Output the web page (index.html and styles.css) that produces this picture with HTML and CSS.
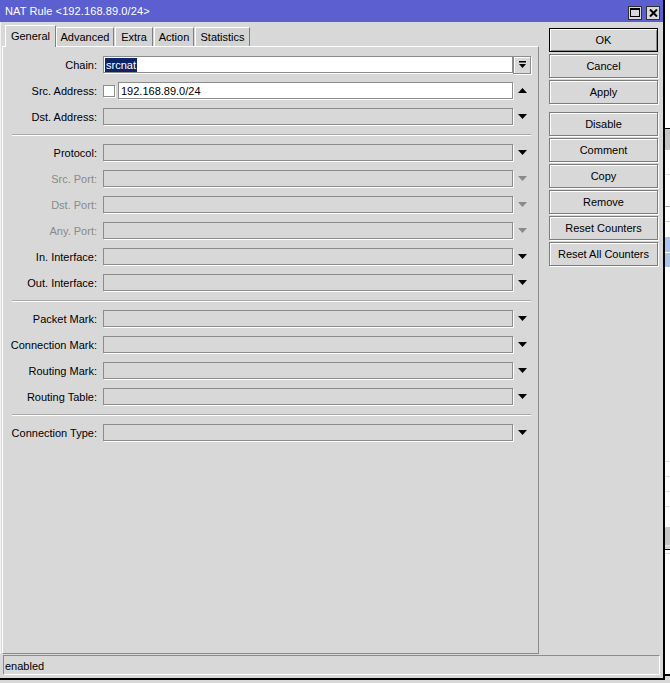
FILE: index.html
```html
<!DOCTYPE html>
<html>
<head>
<meta charset="utf-8">
<title>NAT Rule</title>
<link rel="stylesheet" href="styles.css">
</head>
<body>
<div class="screen">
  <div class="window">
    <div class="titlebar">
      <span class="title">NAT Rule &lt;192.168.89.0/24&gt;</span>
      <div class="tbtns">
        <span class="tbtn"><svg width="10" height="9" viewBox="0 0 10 9"><rect x="0.5" y="0.5" width="9" height="8" fill="none" stroke="#000"/><rect x="0" y="0" width="10" height="2" fill="#000"/></svg></span>
        <span class="tbtn"><svg width="9" height="8" viewBox="0 0 9 8"><path d="M1 0.5L8 7.5M8 0.5L1 7.5" stroke="#000" stroke-width="2"/></svg></span>
      </div>
    </div>
    <div class="main">
      <div class="leftcol">
        <div class="tabs">
          <div class="tab active t-general">General</div>
          <div class="tab t-advanced">Advanced</div>
          <div class="tab t-extra">Extra</div>
          <div class="tab t-action">Action</div>
          <div class="tab t-stats">Statistics</div>
        </div>
        <div class="panel">
          <div class="row">
            <span class="lbl">Chain:</span>
            <div class="field white sel-field"><span class="sel">srcnat</span></div>
            <div class="arrow"><span class="dbtn"><svg width="9" height="8" viewBox="0 0 9 8"><rect x="1" y="0" width="7" height="1.5" fill="#000"/><path d="M1 3h7L4.5 7z" fill="#000"/></svg></span></div>
          </div>
          <div class="row">
            <span class="lbl">Src. Address:</span>
            <span class="check"></span>
            <div class="field white short"><span class="ftext">192.168.89.0/24</span></div>
            <div class="arrow"><svg class="tri" width="9" height="5" viewBox="0 0 9 5"><path d="M4.5 0L9 5H0z" fill="#000"/></svg></div>
          </div>
          <div class="row">
            <span class="lbl">Dst. Address:</span>
            <div class="field"></div>
            <div class="arrow"><svg class="tri" width="9" height="5" viewBox="0 0 9 5"><path d="M0 0h9L4.5 5z" fill="#000"/></svg></div>
          </div>
          <div class="sep"></div>
          <div class="row">
            <span class="lbl">Protocol:</span>
            <div class="field"></div>
            <div class="arrow"><svg class="tri" width="9" height="5" viewBox="0 0 9 5"><path d="M0 0h9L4.5 5z" fill="#000"/></svg></div>
          </div>
          <div class="row">
            <span class="lbl dim">Src. Port:</span>
            <div class="field"></div>
            <div class="arrow"><svg class="tri" width="9" height="5" viewBox="0 0 9 5"><path d="M0 0h9L4.5 5z" fill="#8a8a8a"/></svg></div>
          </div>
          <div class="row">
            <span class="lbl dim">Dst. Port:</span>
            <div class="field"></div>
            <div class="arrow"><svg class="tri" width="9" height="5" viewBox="0 0 9 5"><path d="M0 0h9L4.5 5z" fill="#8a8a8a"/></svg></div>
          </div>
          <div class="row">
            <span class="lbl dim">Any. Port:</span>
            <div class="field"></div>
            <div class="arrow"><svg class="tri" width="9" height="5" viewBox="0 0 9 5"><path d="M0 0h9L4.5 5z" fill="#8a8a8a"/></svg></div>
          </div>
          <div class="row">
            <span class="lbl">In. Interface:</span>
            <div class="field"></div>
            <div class="arrow"><svg class="tri" width="9" height="5" viewBox="0 0 9 5"><path d="M0 0h9L4.5 5z" fill="#000"/></svg></div>
          </div>
          <div class="row">
            <span class="lbl">Out. Interface:</span>
            <div class="field"></div>
            <div class="arrow"><svg class="tri" width="9" height="5" viewBox="0 0 9 5"><path d="M0 0h9L4.5 5z" fill="#000"/></svg></div>
          </div>
          <div class="sep"></div>
          <div class="row">
            <span class="lbl">Packet Mark:</span>
            <div class="field"></div>
            <div class="arrow"><svg class="tri" width="9" height="5" viewBox="0 0 9 5"><path d="M0 0h9L4.5 5z" fill="#000"/></svg></div>
          </div>
          <div class="row">
            <span class="lbl">Connection Mark:</span>
            <div class="field"></div>
            <div class="arrow"><svg class="tri" width="9" height="5" viewBox="0 0 9 5"><path d="M0 0h9L4.5 5z" fill="#000"/></svg></div>
          </div>
          <div class="row">
            <span class="lbl">Routing Mark:</span>
            <div class="field"></div>
            <div class="arrow"><svg class="tri" width="9" height="5" viewBox="0 0 9 5"><path d="M0 0h9L4.5 5z" fill="#000"/></svg></div>
          </div>
          <div class="row">
            <span class="lbl">Routing Table:</span>
            <div class="field"></div>
            <div class="arrow"><svg class="tri" width="9" height="5" viewBox="0 0 9 5"><path d="M0 0h9L4.5 5z" fill="#000"/></svg></div>
          </div>
          <div class="sep"></div>
          <div class="row">
            <span class="lbl">Connection Type:</span>
            <div class="field"></div>
            <div class="arrow"><svg class="tri" width="9" height="5" viewBox="0 0 9 5"><path d="M0 0h9L4.5 5z" fill="#000"/></svg></div>
          </div>
        </div>
      </div>
      <div class="buttons">
        <div class="btn default">OK</div>
        <div class="btn">Cancel</div>
        <div class="btn group-end">Apply</div>
        <div class="btn">Disable</div>
        <div class="btn">Comment</div>
        <div class="btn">Copy</div>
        <div class="btn">Remove</div>
        <div class="btn">Reset Counters</div>
        <div class="btn">Reset All Counters</div>
      </div>
    </div>
    <div class="status">enabled</div>
  </div>
  <div class="backdrop">
    <div class="bd b1"></div>
    <div class="bd bline"></div>
    <div class="bd bhead"></div>
    <div class="bd b2"></div>
    <div class="bd b3"></div>
    <div class="bd b4"></div>
    <div class="bd b5"></div>
    <div class="bd bsel1"></div>
    <div class="bd bsel2"></div>
    <div class="bd b6"></div>
    <div class="bd b7"></div>
    <div class="bd b7"></div>
    <div class="bd b7"></div>
    <div class="bd b8"></div>
    <div class="bd bhead2"></div>
    <div class="bd b9"></div>
    <div class="bd bline"></div>
    <div class="bd b10"></div>
    <div class="bd b11"></div>
  </div>
</div>
</body>
</html>
```

FILE: styles.css
```css
* {
  box-sizing: border-box;
}

html,
body {
  margin: 0;
  padding: 0;
}

body {
  width: 670px;
  height: 683px;
  overflow: hidden;
  background: #d8d8d8;
  font-family: "Liberation Sans", Arial, sans-serif;
  font-size: 11px;
  color: #000;
}

.screen {
  display: flex;
  height: 683px;
}

.window {
  flex: none;
  width: 665px;
  height: 680px;
  display: flex;
  flex-direction: column;
  background: #d8d8d8;
  border-right: 2px solid #000;
  border-bottom: 2px solid #000;
}

/* Title bar */
.titlebar {
  height: 22px;
  flex: none;
  background: #5b5fcf;
  color: #fff;
  display: flex;
  align-items: center;
  justify-content: space-between;
  padding: 0 3px 0 5px;
}

.title {
  white-space: nowrap;
  line-height: 22px;
  letter-spacing: 0.1px;
}

.tbtns {
  display: flex;
  gap: 4px;
  margin-top: 3px;
}

.tbtn {
  width: 14px;
  height: 14px;
  background: #d8d8d8;
  border: 1px solid #303030;
  display: flex;
  align-items: center;
  justify-content: center;
}

/* Main area */
.main {
  flex: none;
  height: 632px;
  display: flex;
  border-left: 1px solid #f2f2f2;
  padding-left: 1px;
}

.leftcol {
  width: 537px;
  display: flex;
  flex-direction: column;
}

.tabs {
  height: 24px;
  padding: 3px 0 0 3px;
  display: flex;
  align-items: flex-end;
}

.tab {
  height: 19px;
  padding-top: 1px;
  line-height: 17px;
  text-align: center;
  white-space: nowrap;
  background: #d3d3d3;
  border-top: 1px solid #fff;
  border-left: 1px solid #fff;
  border-right: 1px solid #808080;
  margin-right: 1px;
}

.tab.active {
  height: 22px;
  padding-top: 0;
  line-height: 20px;
  background: #d8d8d8;
  margin-bottom: -1px;
  margin-right: 0;
  position: relative;
  z-index: 1;
}

.t-general { width: 51px; }
.t-advanced { width: 58px; }
.t-extra { width: 38px; }
.t-action { width: 40px; }
.t-stats { width: 55px; }

.panel {
  height: 608px;
  border-top: 1px solid #fff;
  border-left: 1px solid #fff;
  border-right: 1px solid #8c8c8c;
  border-bottom: 1px solid #8c8c8c;
  padding-top: 9px;
}

.row {
  display: flex;
  align-items: center;
  height: 17px;
  margin-bottom: 9px;
}

.lbl {
  width: 94px;
  height: 17px;
  margin-right: 6px;
  padding-top: 1px;
  text-align: right;
  white-space: nowrap;
  line-height: 17px;
}

.lbl.dim {
  color: #8a8a8a;
}

.field {
  width: 410px;
  height: 17px;
  border: 1px solid #8c8c8c;
  box-shadow: 1px 1px 0 #fff;
  padding-left: 2px;
  line-height: 15px;
  white-space: nowrap;
  display: flex;
  align-items: center;
}

.field.white {
  background: #fff;
}

.field.short {
  width: 395px;
}

.field.sel-field {
  padding-left: 1px;
}

.ftext {
  padding-top: 1px;
  line-height: 14px;
}

.sel {
  background: #0a246a;
  color: #fff;
  line-height: 13px;
  padding: 1px 1px 0 1px;
}

.check {
  width: 12px;
  height: 12px;
  background: #fff;
  border: 1px solid #8c8c8c;
  box-shadow: 1px 1px 0 #fff;
  margin-right: 3px;
}

.arrow {
  width: 18px;
  height: 17px;
  display: flex;
  align-items: center;
  justify-content: center;
}

.tri {
  display: block;
  margin-top: -1px;
  margin-left: 1px;
}

.dbtn {
  width: 18px;
  height: 18px;
  border: 1px solid #8c8c8c;
  box-shadow: inset 1px 1px 0 #fff, 1px 1px 0 #fff;
  display: flex;
  align-items: center;
  justify-content: center;
}

.dbtn svg {
  display: block;
}

.sep {
  width: 519px;
  height: 2px;
  margin: 0 0 8px 9px;
  border-top: 1px solid #a8a8a8;
  border-bottom: 1px solid #fff;
}

/* Buttons */
.buttons {
  width: 109px;
  margin-left: 10px;
  padding-top: 6px;
  display: flex;
  flex-direction: column;
}

.btn {
  height: 24px;
  margin-bottom: 2px;
  border: 1px solid #7c7c7c;
  box-shadow: inset 1px 1px 0 #fff, 1px 1px 0 #fff;
  text-align: center;
  line-height: 22px;
  white-space: nowrap;
}

.btn.default {
  border-color: #000;
  box-shadow: inset 1px 1px 0 #fff, inset -1px -1px 0 #8c8c8c;
}

.btn.group-end {
  margin-bottom: 8px;
}

/* Status bar */
.status {
  flex: none;
  height: 20px;
  margin: 1px 3px 0 3px;
  border-top: 1px solid #8c8c8c;
  border-left: 1px solid #8c8c8c;
  border-bottom: 1px solid #fff;
  border-right: 1px solid #fff;
  padding: 1px 0 0 1px;
  line-height: 18px;
}

/* Background window strip */
.backdrop {
  flex: 1;
  display: flex;
  flex-direction: column;
  background: #d8d8d8;
}

.bd { flex: none; }
.b1 { height: 128px; background: #fff; }
.bline { height: 1px; background: #000; }
.bhead { height: 21px; background: #c6c6c6; }
.b2 { height: 25px; background: #fff; border-bottom: 1px solid #d8d8d8; }
.b3 { height: 32px; background: #fff; border-bottom: 1px solid #a8a8a8; }
.b4 { height: 15px; background: #fff; border-bottom: 1px solid #d0d0d0; }
.b5 { height: 15px; background: #fff; }
.bsel1 { height: 16px; background: #a9c6ee; border-bottom: 1px solid #fff; }
.bsel2 { height: 14px; background: #a9c6ee; }
.b6 { height: 195px; background: #fff; border-bottom: 1px solid #dcdcdc; }
.b7 { height: 15px; background: #fff; border-bottom: 1px solid #dcdcdc; }
.b8 { height: 20px; background: #fff; }
.bhead2 { height: 19px; background: #c8c8c8; border-bottom: 1px solid #e8e8e8; }
.b9 { height: 3px; background: #d8d8d8; }
.b10 { height: 4px; background: #fff; border-bottom: 1px solid #d8d8d8; }
.b11 { height: 122px; background: #fff; border-bottom: 2px solid #000; }
```
